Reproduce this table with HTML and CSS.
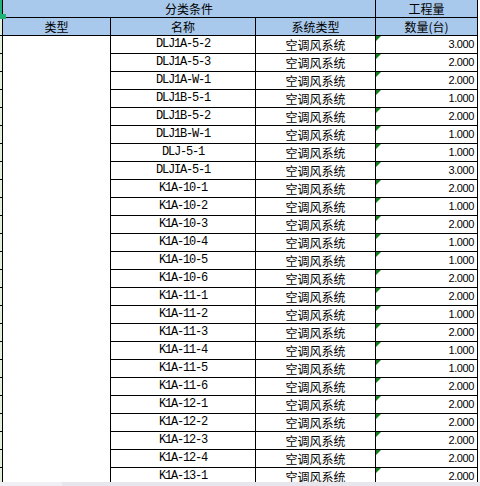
FILE: index.html
```html
<!DOCTYPE html>
<html lang="zh">
<head>
<meta charset="utf-8">
<title>分类条件</title>
<link rel="stylesheet" href="styles.css">
</head>
<body>
<div class="sheet">
  <div class="grid">
    <div class="rh r1"></div>
    <div class="h cond">分类条件</div>
    <div class="h work">工程量</div>
    <div class="rh r2"></div>
    <div class="h t2 c2">类型</div>
    <div class="h t2 c3">名称</div>
    <div class="h t2 c4">系统类型</div>
    <div class="h t2 c5">数量(台)</div>
    <div class="type"></div>

    <div class="rh"></div><div class="name">DLJ1A-5-2</div><div class="sys">空调风系统</div><div class="qty">3.000</div>
    <div class="rh"></div><div class="name">DLJ1A-5-3</div><div class="sys">空调风系统</div><div class="qty">2.000</div>
    <div class="rh"></div><div class="name">DLJ1A-W-1</div><div class="sys">空调风系统</div><div class="qty">2.000</div>
    <div class="rh"></div><div class="name">DLJ1B-5-1</div><div class="sys">空调风系统</div><div class="qty">1.000</div>
    <div class="rh"></div><div class="name">DLJ1B-5-2</div><div class="sys">空调风系统</div><div class="qty">2.000</div>
    <div class="rh"></div><div class="name">DLJ1B-W-1</div><div class="sys">空调风系统</div><div class="qty">1.000</div>
    <div class="rh"></div><div class="name">DLJ-5-1</div><div class="sys">空调风系统</div><div class="qty">1.000</div>
    <div class="rh"></div><div class="name">DLJIA-5-1</div><div class="sys">空调风系统</div><div class="qty">3.000</div>
    <div class="rh"></div><div class="name">K1A-10-1</div><div class="sys">空调风系统</div><div class="qty">2.000</div>
    <div class="rh"></div><div class="name">K1A-10-2</div><div class="sys">空调风系统</div><div class="qty">1.000</div>
    <div class="rh"></div><div class="name">K1A-10-3</div><div class="sys">空调风系统</div><div class="qty">2.000</div>
    <div class="rh"></div><div class="name">K1A-10-4</div><div class="sys">空调风系统</div><div class="qty">1.000</div>
    <div class="rh"></div><div class="name">K1A-10-5</div><div class="sys">空调风系统</div><div class="qty">1.000</div>
    <div class="rh"></div><div class="name">K1A-10-6</div><div class="sys">空调风系统</div><div class="qty">2.000</div>
    <div class="rh"></div><div class="name">K1A-11-1</div><div class="sys">空调风系统</div><div class="qty">2.000</div>
    <div class="rh"></div><div class="name">K1A-11-2</div><div class="sys">空调风系统</div><div class="qty">1.000</div>
    <div class="rh"></div><div class="name">K1A-11-3</div><div class="sys">空调风系统</div><div class="qty">2.000</div>
    <div class="rh"></div><div class="name">K1A-11-4</div><div class="sys">空调风系统</div><div class="qty">1.000</div>
    <div class="rh"></div><div class="name">K1A-11-5</div><div class="sys">空调风系统</div><div class="qty">1.000</div>
    <div class="rh"></div><div class="name">K1A-11-6</div><div class="sys">空调风系统</div><div class="qty">2.000</div>
    <div class="rh"></div><div class="name">K1A-12-1</div><div class="sys">空调风系统</div><div class="qty">2.000</div>
    <div class="rh"></div><div class="name">K1A-12-2</div><div class="sys">空调风系统</div><div class="qty">2.000</div>
    <div class="rh"></div><div class="name">K1A-12-3</div><div class="sys">空调风系统</div><div class="qty">2.000</div>
    <div class="rh"></div><div class="name">K1A-12-4</div><div class="sys">空调风系统</div><div class="qty">2.000</div>
    <div class="rh"></div><div class="name">K1A-13-1</div><div class="sys">空调风系统</div><div class="qty">2.000</div>
  </div>
  <div class="handle"></div>
  <div class="hscroll"><div class="thumb"></div></div>
</div>
</body>
</html>
```
FILE: styles.css
```css
* { box-sizing: border-box; }
body {
  margin: 0;
  background: #fff;
  font-family: "Noto Sans CJK SC", sans-serif;
  font-size: 12px;
  color: #000;
}
.sheet {
  position: relative;
  height: 486px;
  overflow: hidden;
}
.grid {
  display: grid;
  grid-template-columns: 2px 107px 144px 119px 101px;
  grid-template-rows: repeat(27, 17px);
  gap: 1px;
  width: max-content;
  padding: 0 1px 1px 0;
  background: #000;
}
.grid > div {
  line-height: 17px;
  text-align: center;
  white-space: nowrap;
  overflow: hidden;
}
.rh { grid-column: 1; background: #e1f0da; }
.r1 { grid-row: 1; }
.r2 { grid-row: 2; }
.h { background: #a8c9ec; }
.cond { grid-row: 1; grid-column: 2 / 5; }
.work { grid-row: 1; grid-column: 5; }
.t2 { grid-row: 2; }
.c2 { grid-column: 2; }
.c3 { grid-column: 3; }
.c4 { grid-column: 4; }
.c5 { grid-column: 5; }
.type { grid-column: 2; grid-row: 3 / span 25; background: #fff; }
.name {
  grid-column: 3;
  background: #fff;
  font-family: "Liberation Mono", monospace;
  letter-spacing: -1.2px;
}
.sys { grid-column: 4; background: #fff; }
.qty {
  grid-column: 5;
  position: relative;
  background: #fff;
  font-family: "Liberation Sans", sans-serif;
  font-size: 11px;
  letter-spacing: -0.4px;
  text-align: right !important;
  padding-right: 3px;
}
.qty::before {
  content: "";
  position: absolute;
  left: 0;
  top: 0;
  border-top: 5px solid #12801a;
  border-right: 5px solid transparent;
}
.handle {
  position: absolute;
  left: 0;
  top: 0;
  width: 2px;
  height: 15px;
  background: #21b27a;
}
.handle::after {
  content: "";
  position: absolute;
  left: 0;
  top: 14px;
  width: 6px;
  height: 5px;
  background: #21b27a;
}
.hscroll {
  position: absolute;
  left: 0;
  right: 0;
  bottom: 0;
  height: 4px;
  background: #e6e6ec;
}
.thumb {
  width: 62px;
  height: 4px;
  background: #f0f0f4;
}
```
